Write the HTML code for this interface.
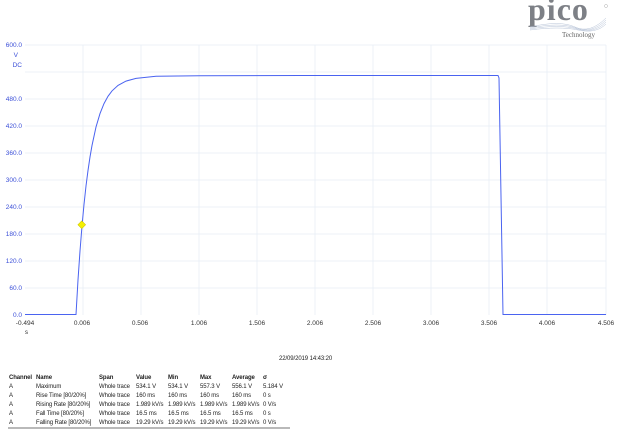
<!DOCTYPE html>
<html><head><style>
body{margin:0;background:#fff;width:620px;height:430px;overflow:hidden;position:relative;font-family:"Liberation Sans",sans-serif}
.t{position:absolute;font-size:6px;color:#222;white-space:nowrap;letter-spacing:-0.1px}
.yl{position:absolute;font-size:6.5px;color:#3b4fd8;text-align:right;width:22px;left:0}
.xl{position:absolute;font-size:6.5px;color:#333;top:320px;width:30px;text-align:center}
</style></head><body>
<div style="position:absolute;left:528px;top:-9px;font-family:'Liberation Serif',serif;font-size:32px;color:#7d8086;letter-spacing:1px;font-weight:bold">pico</div>
<div style="position:absolute;left:562px;top:31px;font-family:'Liberation Serif',serif;font-size:7px;color:#666">Technology</div>
<svg style="position:absolute;left:0;top:0" width="620" height="430">
<g stroke="#b8c4d8" stroke-width="0.5" fill="none">
<path d="M530 27 Q560 20 575 27 T606 18"/><path d="M530 28 Q560 22 576 28 T606 20"/><path d="M530 29 Q560 24 577 29 T606 22"/><path d="M530 30 Q560 26 578 30 T606 24"/>
</g>
<circle cx="606" cy="6" r="1.5" fill="none" stroke="#999" stroke-width="0.4"/>
<g stroke="#e8eef5" stroke-width="0.8">
<line x1="25" y1="45" x2="606" y2="45"/><line x1="25" y1="72" x2="606" y2="72"/><line x1="25" y1="99" x2="606" y2="99"/><line x1="25" y1="126" x2="606" y2="126"/><line x1="25" y1="153" x2="606" y2="153"/><line x1="25" y1="180" x2="606" y2="180"/><line x1="25" y1="207" x2="606" y2="207"/><line x1="25" y1="234" x2="606" y2="234"/><line x1="25" y1="261" x2="606" y2="261"/><line x1="25" y1="288" x2="606" y2="288"/>
<line x1="83" y1="45" x2="83" y2="315"/><line x1="141" y1="45" x2="141" y2="315"/><line x1="199" y1="45" x2="199" y2="315"/><line x1="257" y1="45" x2="257" y2="315"/><line x1="315" y1="45" x2="315" y2="315"/><line x1="373" y1="45" x2="373" y2="315"/><line x1="431" y1="45" x2="431" y2="315"/><line x1="489" y1="45" x2="489" y2="315"/><line x1="547" y1="45" x2="547" y2="315"/><line x1="606" y1="45" x2="606" y2="315"/>
</g>
<polyline fill="none" stroke="#4a63f0" stroke-width="1" points="25,314.5 76,314.5 78,280 80,251 82,226 84,204.5 86,186 88,170.5 90,157 92,145.5 96,127 100,113.6 104,103.6 108,96.3 112,90.9 118,85.4 126,81.1 136,78.4 156,76.3 200,75.8 300,75.5 420,75.5 498,75.5 499,78 503,314.5 606,314.5"/>
<rect x="79" y="222" width="5.5" height="5.5" transform="rotate(45 81.75 224.75)" fill="#f5f000" stroke="#c8c000" stroke-width="0.5"/>
<line x1="8" y1="428" x2="290" y2="428" stroke="#444" stroke-width="0.7"/>
</svg>
<div class="yl" style="top:42px">600.0</div>
<div class="yl" style="top:52px;width:18px">V</div>
<div class="yl" style="top:62px">DC</div>
<div class="yl" style="top:96px">480.0</div>
<div class="yl" style="top:123px">420.0</div>
<div class="yl" style="top:150px">360.0</div>
<div class="yl" style="top:177px">300.0</div>
<div class="yl" style="top:204px">240.0</div>
<div class="yl" style="top:231px">180.0</div>
<div class="yl" style="top:258px">120.0</div>
<div class="yl" style="top:285px">60.0</div>
<div class="yl" style="top:312px">0.0</div>
<div class="xl" style="left:10px">-0.494</div>
<div class="xl" style="left:67px">0.006</div>
<div class="xl" style="left:125px">0.506</div>
<div class="xl" style="left:184px">1.006</div>
<div class="xl" style="left:242px">1.506</div>
<div class="xl" style="left:300px">2.006</div>
<div class="xl" style="left:358px">2.506</div>
<div class="xl" style="left:416px">3.006</div>
<div class="xl" style="left:474px">3.506</div>
<div class="xl" style="left:532px">4.006</div>
<div class="xl" style="left:591px">4.506</div>
<div class="t" style="left:25px;top:330px">s</div>
<div class="t" style="left:279px;top:356px">22/09/2019 14:43:20</div>
<div class="t" style="top:375px;left:9px;font-weight:bold">Channel</div><div class="t" style="top:375px;left:36px;font-weight:bold">Name</div><div class="t" style="top:375px;left:99px;font-weight:bold">Span</div><div class="t" style="top:375px;left:136px;font-weight:bold">Value</div><div class="t" style="top:375px;left:168px;font-weight:bold">Min</div><div class="t" style="top:375px;left:200px;font-weight:bold">Max</div><div class="t" style="top:375px;left:232px;font-weight:bold">Average</div><div class="t" style="top:375px;left:263px;font-weight:bold">σ</div>
<div class="t" style="top:384px;left:9px">A</div><div class="t" style="top:384px;left:36px">Maximum</div><div class="t" style="top:384px;left:99px">Whole trace</div><div class="t" style="top:384px;left:136px">534.1 V</div><div class="t" style="top:384px;left:168px">534.1 V</div><div class="t" style="top:384px;left:200px">557.3 V</div><div class="t" style="top:384px;left:232px">556.1 V</div><div class="t" style="top:384px;left:263px">5.184 V</div>
<div class="t" style="top:393px;left:9px">A</div><div class="t" style="top:393px;left:36px">Rise Time [80/20%]</div><div class="t" style="top:393px;left:99px">Whole trace</div><div class="t" style="top:393px;left:136px">160 ms</div><div class="t" style="top:393px;left:168px">160 ms</div><div class="t" style="top:393px;left:200px">160 ms</div><div class="t" style="top:393px;left:232px">160 ms</div><div class="t" style="top:393px;left:263px">0 s</div>
<div class="t" style="top:402px;left:9px">A</div><div class="t" style="top:402px;left:36px">Rising Rate [80/20%]</div><div class="t" style="top:402px;left:99px">Whole trace</div><div class="t" style="top:402px;left:136px">1.989 kV/s</div><div class="t" style="top:402px;left:168px">1.989 kV/s</div><div class="t" style="top:402px;left:200px">1.989 kV/s</div><div class="t" style="top:402px;left:232px">1.989 kV/s</div><div class="t" style="top:402px;left:263px">0 V/s</div>
<div class="t" style="top:411px;left:9px">A</div><div class="t" style="top:411px;left:36px">Fall Time [80/20%]</div><div class="t" style="top:411px;left:99px">Whole trace</div><div class="t" style="top:411px;left:136px">16.5 ms</div><div class="t" style="top:411px;left:168px">16.5 ms</div><div class="t" style="top:411px;left:200px">16.5 ms</div><div class="t" style="top:411px;left:232px">16.5 ms</div><div class="t" style="top:411px;left:263px">0 s</div>
<div class="t" style="top:420px;left:9px">A</div><div class="t" style="top:420px;left:36px">Falling Rate [80/20%]</div><div class="t" style="top:420px;left:99px">Whole trace</div><div class="t" style="top:420px;left:136px">19.29 kV/s</div><div class="t" style="top:420px;left:168px">19.29 kV/s</div><div class="t" style="top:420px;left:200px">19.29 kV/s</div><div class="t" style="top:420px;left:232px">19.29 kV/s</div><div class="t" style="top:420px;left:263px">0 V/s</div>
</body></html>
